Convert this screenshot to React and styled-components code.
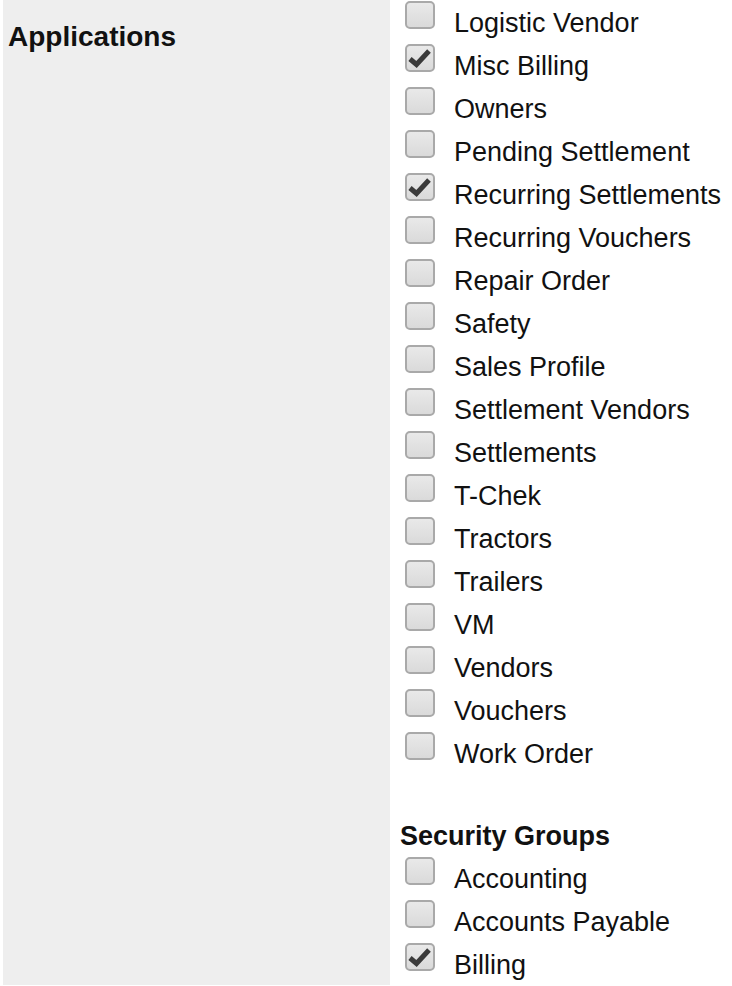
import React from 'react'
import styled, { createGlobalStyle } from 'styled-components'

const GlobalStyle = createGlobalStyle`
  body {
    margin: 0;
    background: #ffffff;
    font-family: "Liberation Sans", Arial, sans-serif;
    color: #111;
  }
`

const Page = styled.div`
  display: flex;
  padding: 0 0 4px 3px;
  width: 732px;
  box-sizing: border-box;
`

const LabelCell = styled.div`
  width: 387px;
  flex: none;
  background: #eeeeee;
  padding: 22px 0 0 5px;
  box-sizing: border-box;
`

const FieldTitle = styled.div`
  font-weight: bold;
  font-size: 28px;
  line-height: 30px;
`

const ValueCell = styled.div`
  flex: 1;
  padding-left: 10px;
`

const Row = styled.label`
  display: flex;
  align-items: flex-start;
  height: 43px;
`

const Box = styled.span`
  flex: none;
  width: 30px;
  height: 28px;
  margin: 1px 0 0 5px;
  box-sizing: border-box;
  border: 2px solid #a9a9a9;
  border-radius: 5px;
  background: linear-gradient(#e9e9e9, #dadada);
  display: flex;
  align-items: center;
  justify-content: center;
`

const Text = styled.span`
  margin-left: 19px;
  padding-top: 8px;
  font-size: 27px;
  line-height: 30px;
  white-space: nowrap;
`

const GroupTitle = styled.div`
  margin: 47px 0 5px;
  font-weight: bold;
  font-size: 27px;
  line-height: 30px;
`

const Tick = () => (
  <svg width="24" height="22" viewBox="0 0 24 22">
    <path d="M2 12 L8.5 17.5 L21 4" fill="none" stroke="#3a3a3a" strokeWidth="5" strokeLinejoin="miter" />
  </svg>
)

const Check = ({ label, checked }) => (
  <Row>
    <Box>{checked && <Tick />}</Box>
    <Text>{label}</Text>
  </Row>
)

const applications = [
  ['Logistic Vendor'],
  ['Misc Billing', true],
  ['Owners'],
  ['Pending Settlement'],
  ['Recurring Settlements', true],
  ['Recurring Vouchers'],
  ['Repair Order'],
  ['Safety'],
  ['Sales Profile'],
  ['Settlement Vendors'],
  ['Settlements'],
  ['T-Chek'],
  ['Tractors'],
  ['Trailers'],
  ['VM'],
  ['Vendors'],
  ['Vouchers'],
  ['Work Order'],
]

const groups = [
  ['Accounting'],
  ['Accounts Payable'],
  ['Billing', true],
]

const App = () => {
  return (
    <>
      <GlobalStyle />
      <Page>
        <LabelCell>
          <FieldTitle>Applications</FieldTitle>
        </LabelCell>
        <ValueCell>
          {applications.map(([label, checked]) => (
            <Check key={label} label={label} checked={checked} />
          ))}
          <GroupTitle>Security Groups</GroupTitle>
          {groups.map(([label, checked]) => (
            <Check key={label} label={label} checked={checked} />
          ))}
        </ValueCell>
      </Page>
    </>
  )
}

export default App
